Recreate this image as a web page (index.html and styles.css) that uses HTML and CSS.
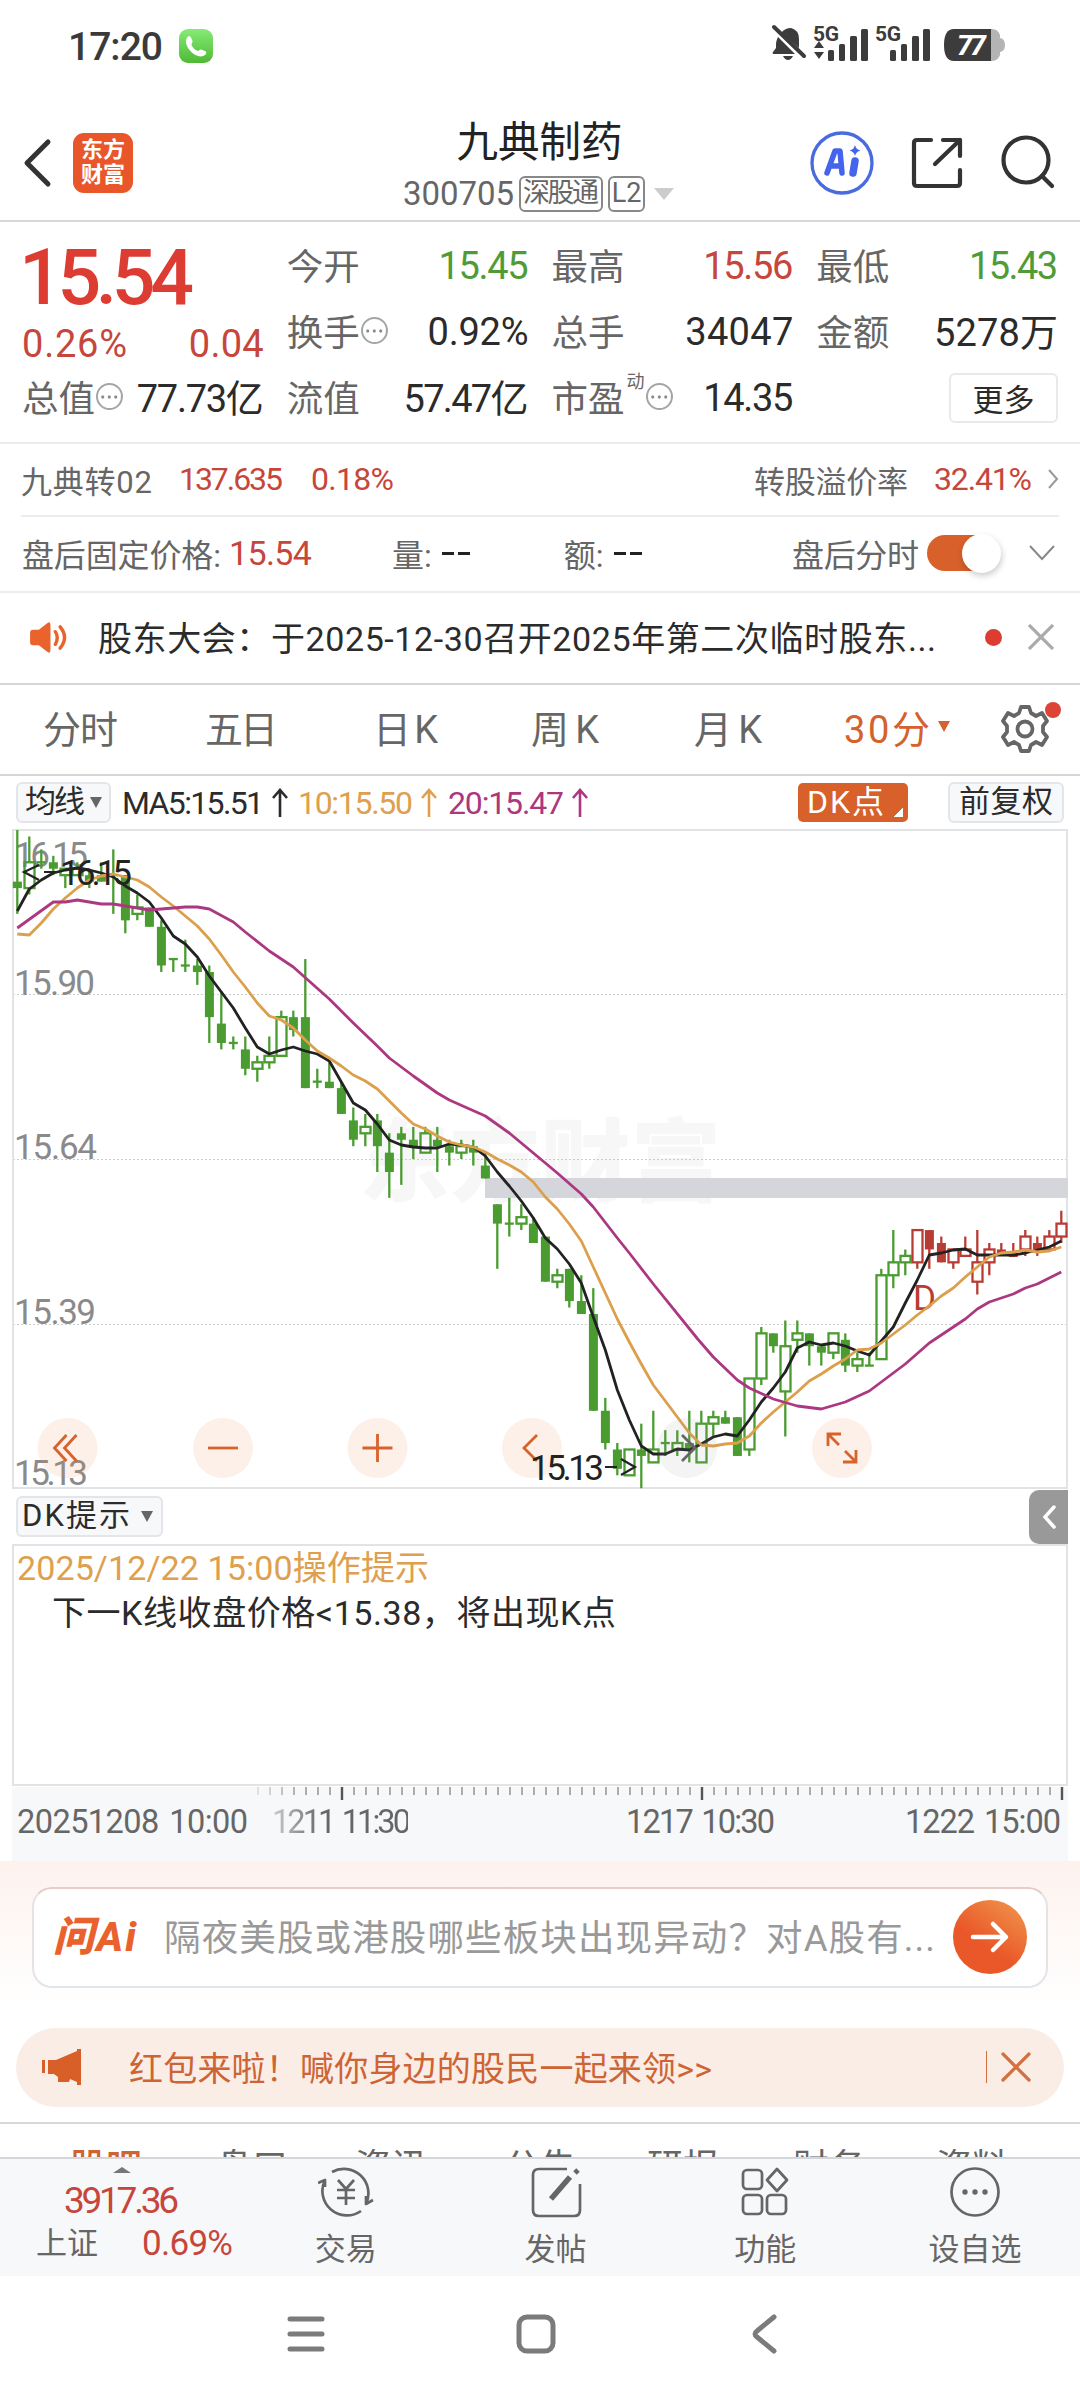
FILE: index.html
```html
<!DOCTYPE html>
<html lang="zh-CN">
<head>
<meta charset="utf-8">
<title>九典制药 300705</title>
<link rel="stylesheet" href="styles.css">
</head>
<body>
<div class="status">
  <span class="clock" data-w="95">17:20</span>
  <svg class="phone" viewBox="0 0 34 34"><defs><linearGradient id="pg" x1="0" y1="0" x2="0" y2="1"><stop offset="0" stop-color="#86ec76"/><stop offset="1" stop-color="#4fb934"/></linearGradient></defs><rect width="34" height="34" rx="9" fill="url(#pg)"/><path d="M8 8.500C9.500 6.500 11 6.500 12 8.500L13.500 12C14 13.500 12 14.500 12.500 16C13.500 18.500 16 21 18.500 21.800C20 22 20.500 20 22 20.500L26 22C28 23 27.500 24.500 26 26C18 32 3 17 8 8.500Z" fill="#fff"/></svg>
  <svg class="sysicons" viewBox="0 0 240 44" fill="#3c3c3c">
    <path d="M6 24V20C6 18 7 15 8 13L25 30H3Q2 29 3 28Z M11 9Q15 4 21 4Q29 6 29 15V24Z M13 32H23Q21 36 18 36T13 32Z"/>
    <path d="M4 3L34 32" stroke="#3c3c3c" stroke-width="4" stroke-linecap="round"/>
    <text x="43" y="17" font-size="21" font-weight="700" textLength="26" class="num">5G</text>
    <path d="M44 24L49 17L54 24ZM44 28L49 35L54 28Z"/>
    <rect x="58" y="26" width="6" height="11" rx="1.500"/><rect x="69" y="20" width="6" height="17" rx="1.500"/><rect x="80" y="12" width="7" height="25" rx="1.500"/><rect x="91" y="5" width="7" height="32" rx="1.500"/>
    <text x="105" y="17" font-size="21" font-weight="700" textLength="26" class="num">5G</text>
    <rect x="120" y="26" width="6" height="11" rx="1.500"/><rect x="131" y="20" width="6" height="17" rx="1.500"/><rect x="142" y="12" width="7" height="25" rx="1.500"/><rect x="153" y="5" width="7" height="32" rx="1.500"/>
    <path d="M215 5H222Q228 5 230 11V14Q235 15 235 21T230 28V31Q228 37 221 37H215Z" fill="#b4b4b4"/>
    <path d="M184 5H221V37H184Q174 37 174 21T184 5Z"/>
    <text x="187" y="31" font-size="28" font-weight="800" fill="#fff" textLength="29" class="num slant">77</text>
  </svg>
</div>

<header class="header">
  <svg class="back" viewBox="0 0 30 50"><path d="M26 4L5 25L26 46" fill="none" stroke="#333" stroke-width="5" stroke-linecap="round" stroke-linejoin="round"/></svg>
  <div class="logo"><span>东方</span><span>财富</span></div>
  <div class="title">
    <h1 data-w="166">九典制药</h1>
    <div class="code"><span data-w="111">300705</span><b data-w="84">深股通</b><b class="lv">L2</b><i></i></div>
  </div>
  <svg class="tools" viewBox="0 0 260 70" fill="none" stroke="#333" stroke-width="4.200" stroke-linecap="round" stroke-linejoin="round">
    <circle cx="42" cy="35" r="30" stroke="#4a6be0" stroke-width="3.300"/>
    <path d="M27 45L35 23H40L42 45M31 38H41" stroke="#4464ee" stroke-width="5.500" stroke-linejoin="round"/><path d="M55 33L53 45" stroke="#4464ee" stroke-width="7.500"/><path d="M55 17Q56 21.500 60.500 22.500Q56 23.500 55 28Q54 23.500 49.500 22.500Q54 21.500 55 17Z" fill="#4464ee" stroke="none"/>
    <path d="M131 12H117Q114 12 114 15V55Q114 58 117 58H157Q160 58 160 55V42M143 12H160V28M160 12L135 36"/>
    <circle cx="226" cy="32" r="22.500"/><path d="M242 48L252 58"/>
  </svg>
</header>

<section class="quote">
  <div class="price">
    <strong data-w="175">15.54</strong>
    <div class="chg"><span data-w="105">0.26%</span><span data-w="75">0.04</span></div>
  </div>
  <div class="cell"><label>今开</label><span class="g" data-w="90">15.45</span></div>
  <div class="cell"><label>最高</label><span class="r" data-w="90">15.56</span></div>
  <div class="cell"><label>最低</label><span class="g" data-w="89">15.43</span></div>
  <div class="cell"><label>换手<i class="tip"></i></label><span data-w="101">0.92%</span></div>
  <div class="cell"><label>总手</label><span data-w="108">34047</span></div>
  <div class="cell up1"><label>金额</label><span data-w="124">5278万</span></div>
  <div class="cell up1"><label>总值<i class="tip"></i></label><span data-w="127">77.73亿</span></div>
  <div class="cell up1"><label>流值</label><span data-w="125">57.47亿</span></div>
  <div class="cell"><label>市盈<sup>动</sup><i class="tip"></i></label><span data-w="90">14.35</span></div>
  <div class="cell more"><button>更多</button></div>
</section>

<section class="row bond">
  <span class="w1" data-w="131">九典转02</span><span class="r" data-w="104">137.635</span><span class="r w3" data-w="83">0.18%</span>
  <span class="push" data-w="154">转股溢价率</span><span class="r w4" data-w="98">32.41%</span>
  <svg class="chev" viewBox="0 0 12 20"><path d="M2 1L10 10L2 19" fill="none" stroke="#999" stroke-width="2"/></svg>
</section>
<section class="row after">
  <span class="a1" data-w="199">盘后固定价格:</span><span class="r" data-w="83">15.54</span>
  <span class="a2">量:</span><em></em><em></em><span class="a3">额:</span><em></em><em></em>
  <span class="push" data-w="127">盘后分时</span><div class="switch"></div>
  <svg class="down" viewBox="0 0 28 18"><path d="M2 2L14 15L26 2" fill="none" stroke="#888" stroke-width="2"/></svg>
</section>
<section class="notice">
  <svg class="speaker" viewBox="0 0 42 34"><path d="M1 12Q1 9 4 9H10L19 2Q22 0 22 4V30Q22 34 19 32L10 25H4Q1 25 1 22Z" fill="#ea622c"/><path d="M27 11Q31 17 27 24M32 6Q41 17 32 28" fill="none" stroke="#ea622c" stroke-width="3.500" stroke-linecap="round"/></svg>
  <span class="ntext" data-w="838">股东大会：于2025-12-30召开2025年第二次临时股东...</span>
  <i class="dot"></i>
  <svg class="x" viewBox="0 0 26 26"><path d="M1 1L25 25M25 1L1 25" stroke="#aaa" stroke-width="3.200"/></svg>
</section>
<nav class="periods">
  <span data-w="75">分时</span><span data-w="73">五日</span><span data-w="65">日K</span><span data-w="68">周K</span><span data-w="68">月K</span><span class="on"><span data-w="86">30分</span><i></i></span>
  <svg class="gear" viewBox="-28 -28 66 56"><path d="M-4 -22H4L6 -16L11 -13L17 -16L22 -8L18 -3V3L22 8L17 16L11 13L6 16L4 22H-4L-6 16L-11 13L-17 16L-22 8L-18 3V-3L-22 -8L-17 -16L-11 -13L-6 -16Z" fill="none" stroke="#666" stroke-width="3.800" stroke-linejoin="round"/><circle r="7.500" fill="none" stroke="#666" stroke-width="3.800"/><circle cx="28" cy="-19" r="8" fill="#dc4436"/></svg>
</nav>

<section class="mabar">
  <div class="pill ma"><span data-w="60">均线</span><i></i></div>
  <span class="m5" data-w="142">MA5:15.51</span><svg class="up k" viewBox="0 0 18 30"><path d="M9 29V3M2 10L9 2L16 10"/></svg>
  <span class="m10" data-w="115">10:15.50</span><svg class="up o" viewBox="0 0 18 30"><path d="M9 29V3M2 10L9 2L16 10"/></svg>
  <span class="m20" data-w="116">20:15.47</span><svg class="up p" viewBox="0 0 18 30"><path d="M9 29V3M2 10L9 2L16 10"/></svg>
  <div class="dk"><span data-w="77">DK点</span></div>
  <div class="pill fq"><span data-w="94">前复权</span></div>
</section>
<svg class="chart" id="chart" viewBox="12 829 1056 660"></svg>
<section class="dkbar">
  <div class="pill dkp"><span data-w="108">DK提示</span><i></i></div>
  <div class="handle"><svg viewBox="0 0 16 26"><path d="M13 3L4 13L13 23" fill="none" stroke="#fff" stroke-width="3.500" stroke-linecap="round"/></svg></div>
</section>
<section class="dkbox">
  <p class="when"><span data-w="412">2025/12/22 15:00操作提示</span></p>
  <p class="what"><span data-w="564">下一K线收盘价格&lt;15.38，将出现K点</span></p>
</section>
<section class="axis">
  <svg id="ticks" viewBox="12 1788 1056 14"></svg>
  <div class="dates"><span data-w="231">20251208 10:00</span><span class="d2" data-w="139">1211 11:30</span><span class="d3" data-w="149">1217 10:30</span><span class="d4" data-w="156">1222 15:00</span></div>
</section>

<section class="ask">
  <div class="askbox">
    <div class="wen"><span data-w="83">问Ai</span></div>
    <span class="ph" data-w="771">隔夜美股或港股哪些板块出现异动？对A股有...</span>
    <div class="go"><svg viewBox="0 0 40 34"><path d="M3 17H35M23 4L36 17L23 30" fill="none" stroke="#fff" stroke-width="4.500" stroke-linecap="round" stroke-linejoin="round"/></svg></div>
  </div>
</section>
<section class="banner">
  <svg class="mega" viewBox="0 0 40 36"><path d="M0 11H3V24H0ZM6 11H14L35 2V0H39V36H35V33L28 30L27 33H16V28L12 25H6Z" fill="#d85f28"/></svg>
  <span class="btext" data-w="583">红包来啦！喊你身边的股民一起来领&gt;&gt;</span>
  <i></i>
  <svg class="bx" viewBox="0 0 30 30"><path d="M2 2L28 28M28 2L2 28" stroke="#d2703f" stroke-width="3.200" stroke-linecap="round"/></svg>
</section>
<nav class="sections"><span class="on">股吧</span><span>盘口</span><span>资讯</span><span>公告</span><span>研报</span><span>财务</span><span>资料</span></nav>

<footer class="bar">
  <div class="index"><i></i><span class="iv" data-w="115">3917.36</span><div><label data-w="62">上证</label><span data-w="91">0.69%</span></div></div>
  <div class="item"><svg viewBox="-28 -26 56 52"><path d="M-14 -20A24.500 24.500 0 0 1 20 12L27 8M20 12V4M15 19A24.500 24.500 0 0 1 -21 -12L-28 -9M-21 -12V-5"/><path d="M-8 -12L0 -3L8 -12M0 -3V13M-9 -2H9M-9 6H9"/></svg>交易</div>
  <div class="item"><svg viewBox="-28 -26 56 52"><path d="M11 -23H-17Q-23 -23 -23 -17V18Q-23 24 -17 24H18Q24 24 24 18V-8"/><path d="M-5 7L14 -15" stroke-width="5.500"/><path d="M19 -19L22 -22" stroke-width="5"/></svg>发帖</div>
  <div class="item"><svg viewBox="-28 -26 56 52"><rect x="-22" y="-22" width="19" height="19" rx="4"/><rect x="-22" y="3" width="19" height="19" rx="4"/><rect x="2" y="3" width="19" height="19" rx="4"/><path d="M12 -23L22 -12L12 -1L2 -12Z"/></svg>功能</div>
  <div class="item"><svg viewBox="-28 -26 56 52"><circle r="23.500"/><g fill="#666" stroke="none"><circle cx="-10" r="2.700"/><circle r="2.700"/><circle cx="10" r="2.700"/></g></svg>设自选</div>
</footer>
<div class="sysnav">
  <svg viewBox="0 0 1080 124" fill="none" stroke="#7b7b7b" stroke-width="5" stroke-linecap="round"><path d="M290 43H322M290 58H322M290 73H322"/><rect x="519" y="41" width="34" height="34" rx="8"/><path d="M774 41L757 55Q753 58 757 61L774 75" stroke-linejoin="round"/></svg>
</div>
<script src="app.js"></script>
</body>
</html>
```
FILE: styles.css
```css
* { box-sizing: border-box; margin: 0; padding: 0; }
body { width: 1080px; height: 2400px; overflow: hidden; background: #fff; color: #2b2b2b; font-family: Roboto, "Noto Sans CJK SC", sans-serif; display: flex; flex-direction: column; }
body > * { flex: none; }
i, em { font-style: normal; }
span, label, h1, p { white-space: nowrap; }
svg { display: block; }
.num { font-family: Roboto, sans-serif; }
.slant { font-style: italic; }
.r { color: #c6463c; }
.g { color: #4f9c37; }
.push { margin-left: auto; }

.status { height: 92px; display: flex; align-items: flex-start; padding: 24px 70px 0 68px; }
.clock { font-size: 39px; line-height: 46px; font-weight: 500; color: #3a3a3a; }
.phone { width: 34px; height: 34px; margin: 5px 0 0 16px; }
.sysicons { width: 240px; height: 44px; margin-left: auto; }

.header { height: 130px; border-bottom: 2px solid #d9d9d9; display: flex; align-items: flex-start; padding-left: 22px; }
.back { width: 30px; height: 50px; margin-top: 46px; }
.logo { width: 60px; height: 60px; margin: 41px 0 0 21px; background: #e8562a; border-radius: 11px; color: #fff; font-size: 22px; font-weight: 700; line-height: 25px; padding-top: 4px; display: flex; flex-direction: column; align-items: center; }
.title { flex: 1; display: flex; flex-direction: column; align-items: center; padding-left: 144px; }
.title h1 { font-size: 41.500px; font-weight: 400; line-height: 50px; margin-top: 26px; color: #222; padding-left: 2px; }
.code { display: flex; align-items: center; height: 37px; margin-top: 7px; color: #666; font-size: 33px; }
.code b { font-weight: 400; font-size: 27px; border: 2px solid #888; border-radius: 6px; height: 36px; line-height: 30px; margin-left: 5px; text-align: center; }
.code .lv { width: 37px; }
.code i { border: 10px solid transparent; border-top: 12px solid #ccc; border-bottom: 0; margin-left: 9px; }
.tools { width: 260px; height: 70px; margin: 36px 20px 0 0; }

.quote { height: 222px; border-bottom: 2px solid #ececec; display: grid; grid-template-columns: repeat(4, 1fr); grid-template-rows: repeat(3, 66px); column-gap: 23px; padding: 11px 22px 0; }
.price { grid-row: span 2; }
.price strong { display: block; font-size: 77px; font-weight: 500; line-height: 90px; color: #dc3c32; margin-left: -3px; white-space: nowrap; }
.chg { display: flex; justify-content: space-between; font-size: 38px; line-height: 42px; color: #c6463c; }
.cell { display: flex; justify-content: space-between; align-items: center; font-size: 38px; }
.cell label { font-size: 36.500px; color: #666; display: flex; align-items: center; margin-top: -4px; }
.up1 > span { margin-top: -5px; }
.tip { width: 27px; height: 27px; border: 2px solid #a5a5a5; border-radius: 50%; margin: 1px 0 0 1px; background: radial-gradient(circle, #888 1.300px, transparent 1.900px) 1.500px 9px / 6.500px 6px repeat-x; }
.cell sup { font-size: 18px; align-self: flex-start; margin: -3px 0 0 2px; }
.more { justify-content: flex-end; }
.more button { width: 109px; height: 50px; background: #fff; border: 2px solid #e9e9e9; border-radius: 6px; font: 31px "Noto Sans CJK SC", sans-serif; color: #2b2b2b; line-height: 42px; }

.row { display: flex; align-items: center; margin: 0 21px; font-size: 32px; color: #666; }
.bond { height: 73px; border-bottom: 2px solid #ededed; padding-bottom: 1px; }
.bond .w1 { margin-right: 27px; font-size: 31px; } .bond .w3 { margin-left: 28px; } .bond .push { font-size: 31px; } .bond .w4 { margin-left: 26px; }
.chev { width: 12px; height: 20px; margin-left: 15px; }
.after { height: 76px; margin: 0; padding: 0 22px 2px; border-bottom: 2px solid #ededed; }
.after > span { font-size: 32px; }
.after .r { margin-left: 8px; font-size: 34px; }
.after .a2 { margin-left: 80px; margin-right: 10px; } .after .a3 { margin-left: 90px; margin-right: 10px; }
.after em { width: 12px; height: 3px; background: #222; margin-right: 4px; }
.switch { width: 72px; height: 36px; border-radius: 18px; background: #d7602b; margin-left: 8px; display: flex; justify-content: flex-end; }
.switch::after { content: ""; width: 39px; height: 39px; margin: -1px -2px 0 0; border-radius: 50%; background: #fff; box-shadow: 1px 3px 6px #0003; }
.down { width: 28px; height: 18px; margin: 0 2px 0 29px; }

.notice { height: 92px; border-bottom: 2px solid #d6d6d6; display: flex; align-items: center; padding: 0 26px 2px 29px; }
.speaker { width: 41px; height: 33px; }
.ntext { font-size: 34px; margin-left: 28px; margin-top: -2px; }
.dot { width: 17px; height: 17px; border-radius: 50%; background: #dc3c32; margin-left: auto; }
.x { width: 26px; height: 26px; margin-left: 26px; }

.periods { height: 91px; border-bottom: 2px solid #d6d6d6; display: grid; grid-template-columns: 162px 168px 158px 163px 150px 153px 66px; align-items: center; padding: 0 0 6px 43px; font-size: 38px; color: #666; }
.periods .on { color: #d4622c; display: flex; align-items: center; }
.periods .on i, .pill i { border: 6.500px solid transparent; border-top: 11px solid #d4622c; border-bottom: 0; margin-left: 8px; }
.gear { width: 66px; height: 56px; margin-top: 4px; }

.mabar { height: 53px; display: flex; align-items: center; padding: 0 16px; font-size: 32px; }
.pill { height: 41px; background: #f7f8fa; border: 2px solid #e2e5ea; border-radius: 6px; display: flex; align-items: center; color: #2b2b2b; font-size: 31px; line-height: 34px; padding-bottom: 1px; }
.pill i { border-top-color: #666; margin-left: 5px; }
.ma { width: 95px; padding-left: 7px; }
.m5 { margin-left: 11px; }
.m10 { color: #dea04e; margin-left: 9px; }
.m20 { color: #ad3681; margin-left: 10px; }
.up { width: 18px; height: 30px; fill: none; stroke-width: 2.600; margin-left: 7px; }
.k { stroke: #2b2b2b; } .o { stroke: #dea04e; } .p { stroke: #ad3681; }
.dk { width: 110px; height: 39px; margin-left: auto; background: linear-gradient(135deg, transparent 50%, #fff 50%) no-repeat 96px 24px / 9px 10px, #d7602b; border-radius: 5px; color: #fff; font-size: 32px; line-height: 38px; padding-left: 9px; }
.fq { margin-left: 40px; width: 116px; justify-content: center; }
.chart { width: 1056px; height: 660px; margin: 0 12px; }

.dkbar { height: 55px; display: flex; justify-content: space-between; padding: 0 12px 0 16px; align-items: center; }
.dkp { width: 147px; padding-left: 4px; }
.dkp i { margin-left: 11px; }
.handle { width: 39px; height: 54px; background: #999; border-radius: 10px 0 0 10px; display: flex; align-items: center; justify-content: center; }
.handle svg { width: 16px; height: 26px; }
.dkbox { height: 242px; margin: 0 12px; border: 2px solid #e2e3e4; padding: 0 3px; }
.when { color: #dea04e; font-size: 34px; line-height: 45px; }
.what { font-size: 34px; line-height: 45px; padding-left: 35px; }
.axis { height: 74px; margin: 1px 12px 0; background: #f7f8fa; }
.axis svg { width: 1056px; height: 14px; }
.dates { display: flex; font-size: 32.500px; line-height: 43px; color: #666; padding-left: 5px; word-spacing: 3px; }
.d2 { margin-left: 24px; background: linear-gradient(90deg, #ccc, #666 50px); -webkit-background-clip: text; color: transparent; }
.d3 { margin-left: 215px; } .d4 { margin-left: 130px; }

.ask { height: 167px; background: linear-gradient(#fdf2ee, #fff 88%); padding: 26px 32px; }
.askbox { height: 101px; background: #fff; border: 2px solid; border-color: #e6cdc6 #e8e2e4 #dfe5ec; border-radius: 20px; display: flex; align-items: center; padding: 0 19px 1px; }
.wen { width: 93px; font-size: 41px; line-height: 50px; font-weight: 800; font-style: italic; color: #e9622d; margin-top: -1px; }
.ph { margin-left: 18px; font-size: 36.500px; color: #999; margin-top: -4px; }
.go { width: 74px; height: 74px; margin-left: auto; border-radius: 50%; background: linear-gradient(35deg, #ea5728 40%, #f09a50); display: flex; align-items: center; justify-content: center; }
.go svg { width: 40px; height: 34px; }
.banner { height: 79px; margin: 0 16px; border-radius: 40px; background: #faede6; display: flex; align-items: center; padding: 0 33px 1px 26px; color: #cd6435; font-size: 34px; }
.mega { width: 40px; height: 36px; }
.btext { margin-left: 47px; margin-top: -2px; }
.banner > i { width: 1px; height: 32px; background: #d2703f; margin-left: auto; }
.bx { width: 30px; height: 30px; margin-left: 14px; }
.sections { height: 35px; overflow: hidden; margin-top: 15px; border-top: 2px solid #d9d9d9; display: grid; grid-template-columns: 146px 139px 149px 143px 146px 143px 80px; padding: 22px 0 0 70px; font-size: 36px; line-height: 44px; color: #666; }
.sections .on { color: #cd6435; font-weight: 500; }

.bar { height: 119px; background: #f7f8fa; border-top: 2px solid #d3d6da; display: grid; grid-template-columns: 241px repeat(4, 209.700px); }
.index { color: #c6463c; display: flex; flex-direction: column; align-items: center; padding-left: 2px; }
.index > i { border: 9px solid transparent; border-bottom: 6px solid #777; border-top: 0; margin-top: 8px; }
.iv { font-size: 37px; line-height: 44px; margin-top: 6px; }
.index div { display: flex; align-self: stretch; padding: 0 0 0 34px; font-size: 35px; line-height: 42px; }
.index label { color: #666; font-size: 31px; margin-right: 44px; }
.item { display: flex; flex-direction: column; align-items: center; color: #666; font-size: 31px; line-height: 46px; padding-top: 7px; }
.item svg { width: 56px; height: 52px; margin-bottom: 9px; fill: none; stroke: #666; stroke-width: 2.700; stroke-linejoin: round; }
.sysnav { height: 124px; }
```
FILE: app.js
```js
// Candles from oldest to newest: [high, low, bodyTop, bodyBottom, style],
// in price ticks of 0.01 below 16.15. Style: 1 filled, 0 hollow.
const candles = [
[0,13,8,9,1],[1,10,5,9,0],[3,6,5,5,1],[4,7,5,6,1],[6,9,6,7,0],[5,7,6,7,0],[6,9,7,8,1],[5,8,7,8,1],[3,13,7,7,1],[7,16,7,14,1],
[10,14,12,13,0],[12,15,12,15,1],[14,22,15,21,1],[20,22,20,20,1],[17,22,21,21,1],[20,24,21,22,1],[21,33,22,29,1],[25,34,30,33,1],[32,34,33,33,1],[32,38,34,37,1],
[35,39,36,37,0],[32,37,35,36,0],[28,35,29,35,0],[28,32,29,31,1],[20,40,29,40,1],[37,40,39,39,1],[36,40,39,40,1],[39,44,40,44,1],[43,49,45,48,1],[44,49,46,47,0],
[44,53,45,49,1],[47,57,50,53,1],[46,55,47,48,1],[46,51,48,49,1],[46,50,47,50,0],[46,53,48,49,1],[48,52,49,50,1],[48,51,49,50,0],[48,52,49,50,1],[50,54,52,54,1],
[58,68,58,61,1],[57,63,61,61,1],[58,62,60,61,0],[60,64,61,64,1],[63,70,63,70,1],[68,71,69,70,0],[68,74,68,73,1],[69,75,73,75,1],[71,90,75,90,1],[88,96,90,95,1],
[95,100,96,99,1],[96,100,96,100,0],[92,102,96,97,1],[90,98,96,98,0],[93,97,95,95,1],[93,97,95,96,0],[90,98,95,96,1],[90,98,92,98,0],[90,94,91,92,0],[90,92,91,92,1],
[91,97,91,97,1],[85,97,85,96,0],[77,86,78,85,0],[78,81,78,80,1],[76,94,80,87,0],[76,81,78,79,0],[78,83,78,80,1],[80,83,80,81,1],[78,82,78,81,0],[78,84,79,83,1],
[81,84,82,83,0],[81,83,83,83,1],[68,82,69,82,0],[62,71,67,69,0],[65,69,66,67,0],[62,68,62,67,0],[62,68,62,65,1],[63,67,64,67,1],[65,68,65,67,0],[63,66,65,66,0],
[62,72,67,70,0],[64,69,65,67,0],[64,66,65,66,1],[64,66,66,66,1],[62,66,63,65,0],[63,66,64,65,1],[62,65,63,65,0],[59,64,61,63,0]];
const FIRST_RED = 75;
const ma5 = [911,889,880,873,870,868,870,873,877,886,893,902,918,936,944,957,976,992,1008,1028,1047,1054,1050,1047,1051,1054,1061,1082,1103,1110,1124,1140,1145,1147,1148,1148,1144,1145,1147,1156,1172,1186,1201,1218,1238,1249,1264,1283,1317,1350,1390,1420,1446,1454,1454,1449,1450,1444,1437,1434,1436,1420,1402,1388,1372,1348,1342,1345,1343,1346,1351,1355,1341,1327,1303,1280,1255,1253,1250,1249,1255,1255,1255,1255,1253,1250,1247,1241];
const ma10 = [934,935,923,909,898,888,880,876,874,877,880,887,897,906,916,926,939,955,972,987,1003,1016,1020,1028,1040,1051,1058,1066,1075,1081,1089,1101,1113,1124,1129,1136,1142,1145,1147,1152,1159,1165,1172,1182,1197,1209,1224,1241,1267,1293,1319,1342,1364,1385,1401,1417,1433,1445,1446,1444,1443,1436,1423,1412,1402,1392,1381,1374,1366,1359,1350,1349,1343,1334,1325,1315,1306,1296,1288,1277,1267,1257,1253,1252,1250,1252,1251,1247];
// The 20-period average is sparse: [index, y].
const ma20 = [[0,928],[3,902],[4,902],[5,900],[7,904],[8,904],[11,910],[12,909],[14,907],[15,907],[16,909],[18,922],[19,932],[21,951],[23,967],[26,999],[28,1023],[30,1046],[31,1058],[33,1076],[35,1093],[36,1100],[39,1116],[41,1133],[43,1153],[45,1173],[47,1194],[48,1207],[50,1238],[51,1253],[53,1284],[56.7,1339],[58,1357],[60,1380],[61,1388],[63,1399],[65,1406],[67,1409],[69,1402],[71,1391],[74,1364],[76,1343],[79,1319],[80,1309],[81,1302],[83,1294],[84,1288],[85,1284],[87,1272]];

const px = i => 17.3 + 12 * i;
const py = k => 830 + 6.453 * k;
let s = `<rect x="12.500" y="830" width="1055" height="658" fill="#fff"/>`;
s += `<text x="359" y="1194" font-size="90" font-weight="900" fill="#f7f7f8" textLength="362" font-family="Noto Sans CJK SC">东方财富</text>`;
for (const y of [994.5, 1159.5, 1324.5]) s += `<path d="M13 ${y}H1068" stroke="#ccc" stroke-dasharray="2 2"/>`;
s += `<path d="M13 829V1489M1067 829V1489" stroke="#e2e3e4" stroke-width="2"/><path d="M12 830H1068M12 1488H1068" stroke="#e2e3e4" stroke-width="2"/>`;
s += `<rect x="485" y="1178" width="583" height="20" fill="#d5d6dc"/>`;
const labels = [['16.15',867,74],['15.90',995,81],['15.64',1159,83],['15.39',1324,82],['15.13',1485,74]];
for (const [t, y, w] of labels) s += `<text x="14" y="${y}" font-size="35" fill="#8a8a8a" textLength="${w}">${t}</text>`;
candles.forEach(([h, l, t, b, f], i) => {
  const x = px(i), c = i >= FIRST_RED ? '#b93c34' : '#4a9c30';
  if (f) {
    s += `<path d="M${x} ${py(h)}V${py(l)}" stroke="${c}" stroke-width="2.300"/>`;
    s += t === b ? `<path d="M${x - 4.5} ${py(t)}h9" stroke="${c}" stroke-width="2.300"/>`
                 : `<rect x="${x - 4.4}" y="${py(t)}" width="9" height="${py(b) - py(t)}" fill="${c}"/>`;
  } else {
    s += `<path d="M${x} ${py(h)}V${py(t)}M${x} ${py(b)}V${py(l)}" stroke="${c}" stroke-width="2.300"/>`;
    s += `<rect x="${x - 4.8}" y="${py(t)}" width="10" height="${py(b) - py(t)}" fill="none" stroke="${c}" stroke-width="2.300"/>`;
  }
});
const line = (pts, c) => `<polyline points="${pts.map(p => px(p[0]) + ',' + p[1]).join(' ')}" fill="none" stroke="${c}" stroke-width="2.800" stroke-linejoin="round"/>`;
s += `<text x="913" y="1310" font-size="35" fill="#b93c34">D</text>`;
s += line(ma5.map((y, i) => [i, y]), '#222') + line(ma10.map((y, i) => [i, y]), '#dc9f4c') + line(ma20, '#ab3880');

// Round zoom and scroll controls
const btn = (x, d, c = '#d7622c', bg = '#e8925a22') => `<circle cx="${x}" cy="1448" r="30" fill="${bg}"/><path transform="translate(${x} 1448)" d="${d}" fill="none" stroke="${c}" stroke-width="2.800"/>`;
s += btn(67.5, 'M-1 -13L-13 0L-1 13M9 -13L-3 0L9 13');
s += btn(223, 'M-15 0H15') + btn(377.5, 'M-15 0H15M0 -14V14');
s += btn(532, 'M5 -13L-8 0L5 13');
s += btn(687, 'M-5 -13L8 0L-5 13', '#666', '#9999991c');
s += btn(842, 'M-14 -2V-14H-1M-14 -14L-3 -3M14 2V14H1M14 14L3 3');
const note = 'font-size="35" fill="#222"';
s += `<text x="60" y="885" ${note} textLength="72">16.15</text><path d="M39 865L24 872L39 880M44 872H58" fill="none" stroke="#222" stroke-width="2.200"/>`;
s += `<text x="530" y="1480" ${note} textLength="74">15.13</text><path d="M605 1467H617M621 1459L635 1467L621 1475" fill="none" stroke="#222" stroke-width="2.200"/>`;
document.getElementById('chart').innerHTML = s;

// Time axis: one tick per candle, a long one at each labelled date
let t = '';
for (let x = 258; x <= 1062; x += 12) {
  const major = (x - 342) % 360 === 0;
  t += `<path d="M${x} 1788v${major ? 13 : 8}" stroke="${major ? '#555' : '#999'}" stroke-width="${major ? 2.4 : 1.6}" opacity="${Math.min(1, (x - 240) / 60)}"/>`;
}
document.getElementById('ticks').innerHTML = t;

document.querySelectorAll('[data-w]').forEach(el => {
  const r = document.createRange();
  r.selectNodeContents(el);
  const n = el.textContent.length, boxed = el.tagName === 'B';
  const w = el.dataset.w - (boxed ? 8 : 0);
  const natural = r.getBoundingClientRect().width;
  const ls = (w - natural) / (n - 1);
  el.style.letterSpacing = ls + 'px';
  if (boxed) { el.style.width = el.dataset.w + 'px'; el.style.paddingLeft = '2px'; el.style.textAlign = 'left'; }
  else el.style.marginRight = (parseFloat(getComputedStyle(el).marginRight) - ls) + 'px';
});
```
